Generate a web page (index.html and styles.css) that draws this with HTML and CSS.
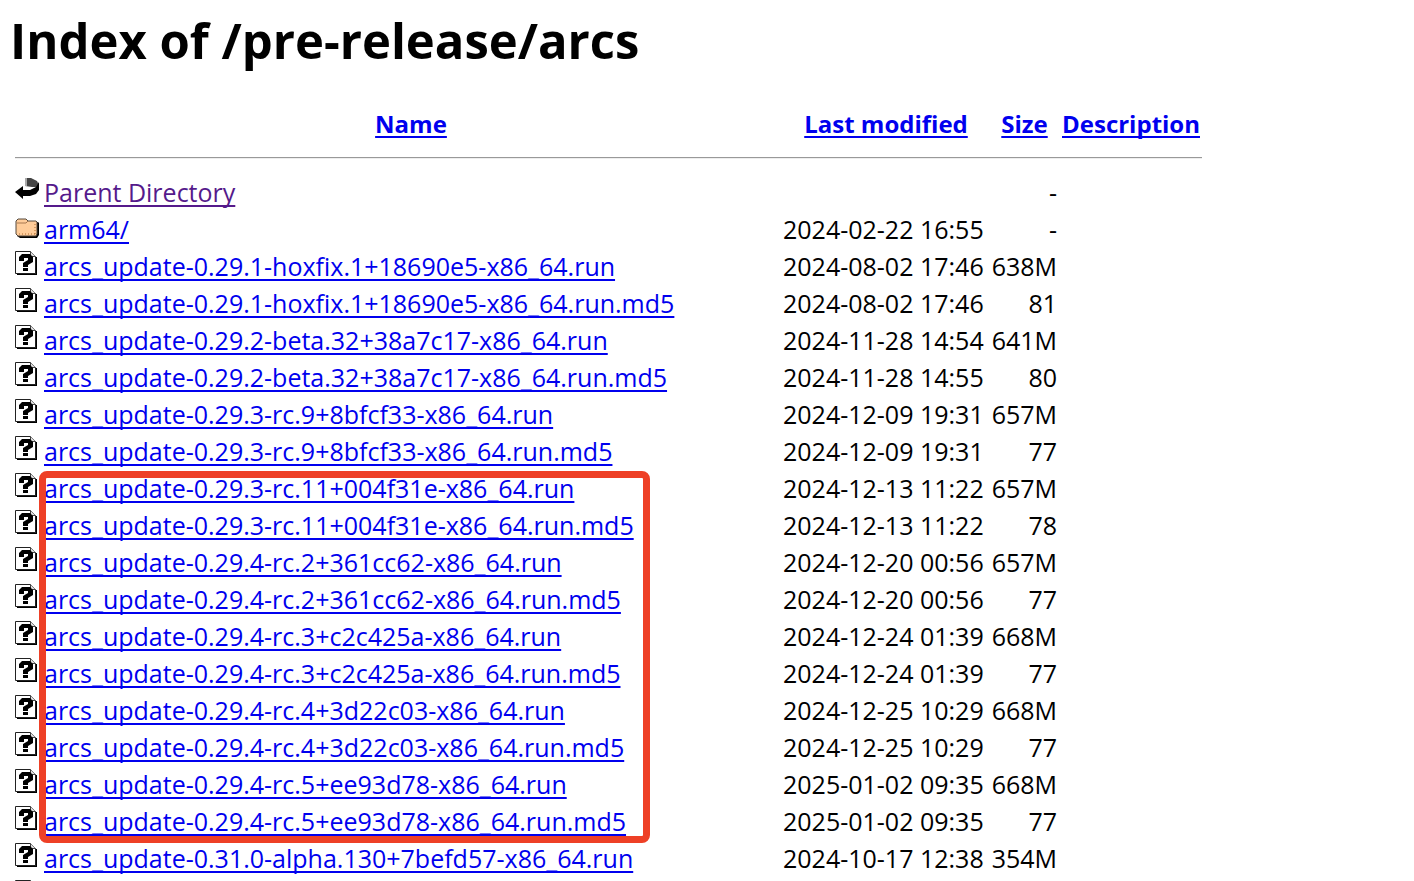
FILE: index.html
```
<!DOCTYPE html>
<html lang="en">
<head>
    <meta charset="UTF-8">
    <meta name="viewport" content="width=device-width, initial-scale=1.0">
    <title>Index of /pre-release/arcs</title>
    <link rel="stylesheet" href="styles.css">
</head>
<body>

<!-- Icon shapes shared by the rows -->
<svg class="sprite" aria-hidden="true">
    <symbol id="back" viewBox="0 0 25 28">
        <path d="M10 2h6l6 3 2 4-1 2-6 0-7-1z" fill="#444"/>
        <path d="M10 2h2v8h-2z" fill="#aaa"/>
        <path d="M24 6v8l-3 4-6 2H8v3L0 16l8-6v4h7l6-3z" fill="#000"/>
    </symbol>
    <symbol id="folder" viewBox="0 0 25 28">
        <path d="M3 9h20l1 1v12l-2 3H5l-3-2z" fill="#000"/>
        <path d="M1 8l2-2h8l2 2h8l1 1v12l-1 2H3l-2-2z" fill="#ffcc99" stroke="#54483c"/>
        <path d="M2 10h9l2-2" fill="none" stroke="#a87850"/>
        <path d="M4 21h16M20 11v10" fill="none" stroke="#b06c30" stroke-dasharray="1 2"/>
    </symbol>
    <symbol id="unknown" viewBox="0 0 25 28">
        <path d="M2 24h19V7" fill="none" stroke="#000" stroke-width="2"/>
        <path d="M.5 1.5h15l5 5v17H.5z" fill="#fff" stroke="#222"/>
        <path d="M15.500 1.500v5h5" fill="#ddd" stroke="#444"/>
        <path d="M4 7l3-3h8l3 3v5l-5 3v2H8v-4l5-3V8H9v3H4z" fill="#000"/>
        <path d="M8 18h5v3H8z" fill="#000"/>
    </symbol>
</svg>

<h1>Index of /pre-release/arcs</h1>

<table class="listing">
    <colgroup>
        <col class="col-icon">
        <col class="col-name">
        <col class="col-date">
        <col class="col-size">
        <col class="col-desc">
    </colgroup>
    <thead>
        <tr><th></th><th><a href="#name">Name</a></th><th><a href="#modified">Last modified</a></th><th><a href="#size">Size</a></th><th><a href="#description">Description</a></th></tr>
        <tr class="rule"><th colspan="5"><hr></th></tr>
    </thead>
    <tbody>
        <tr><td><svg class="icon"><use href="#back"/></svg></td><td><a class="visited" href="#parent">Parent Directory</a></td><td></td><td>-</td><td></td></tr>
        <tr><td><svg class="icon"><use href="#folder"/></svg></td><td><a href="#f">arm64/</a></td><td>2024-02-22 16:55</td><td>-</td><td></td></tr>
        <tr><td><svg class="icon"><use href="#unknown"/></svg></td><td><a href="#f">arcs_update-0.29.1-hoxfix.1+18690e5-x86_64.run</a></td><td>2024-08-02 17:46</td><td>638M</td><td></td></tr>
        <tr><td><svg class="icon"><use href="#unknown"/></svg></td><td><a href="#f">arcs_update-0.29.1-hoxfix.1+18690e5-x86_64.run.md5</a></td><td>2024-08-02 17:46</td><td>81</td><td></td></tr>
        <tr><td><svg class="icon"><use href="#unknown"/></svg></td><td><a href="#f">arcs_update-0.29.2-beta.32+38a7c17-x86_64.run</a></td><td>2024-11-28 14:54</td><td>641M</td><td></td></tr>
        <tr><td><svg class="icon"><use href="#unknown"/></svg></td><td><a href="#f">arcs_update-0.29.2-beta.32+38a7c17-x86_64.run.md5</a></td><td>2024-11-28 14:55</td><td>80</td><td></td></tr>
        <tr><td><svg class="icon"><use href="#unknown"/></svg></td><td><a href="#f">arcs_update-0.29.3-rc.9+8bfcf33-x86_64.run</a></td><td>2024-12-09 19:31</td><td>657M</td><td></td></tr>
        <tr><td><svg class="icon"><use href="#unknown"/></svg></td><td><a href="#f">arcs_update-0.29.3-rc.9+8bfcf33-x86_64.run.md5</a></td><td>2024-12-09 19:31</td><td>77</td><td></td></tr>
    </tbody>
    <!-- Builds outlined in red -->
    <tbody class="marked">
        <tr><td><svg class="icon"><use href="#unknown"/></svg></td><td><a href="#f">arcs_update-0.29.3-rc.11+004f31e-x86_64.run</a></td><td>2024-12-13 11:22</td><td>657M</td><td></td></tr>
        <tr><td><svg class="icon"><use href="#unknown"/></svg></td><td><a href="#f">arcs_update-0.29.3-rc.11+004f31e-x86_64.run.md5</a></td><td>2024-12-13 11:22</td><td>78</td><td></td></tr>
        <tr><td><svg class="icon"><use href="#unknown"/></svg></td><td><a href="#f">arcs_update-0.29.4-rc.2+361cc62-x86_64.run</a></td><td>2024-12-20 00:56</td><td>657M</td><td></td></tr>
        <tr><td><svg class="icon"><use href="#unknown"/></svg></td><td><a href="#f">arcs_update-0.29.4-rc.2+361cc62-x86_64.run.md5</a></td><td>2024-12-20 00:56</td><td>77</td><td></td></tr>
        <tr><td><svg class="icon"><use href="#unknown"/></svg></td><td><a href="#f">arcs_update-0.29.4-rc.3+c2c425a-x86_64.run</a></td><td>2024-12-24 01:39</td><td>668M</td><td></td></tr>
        <tr><td><svg class="icon"><use href="#unknown"/></svg></td><td><a href="#f">arcs_update-0.29.4-rc.3+c2c425a-x86_64.run.md5</a></td><td>2024-12-24 01:39</td><td>77</td><td></td></tr>
        <tr><td><svg class="icon"><use href="#unknown"/></svg></td><td><a href="#f">arcs_update-0.29.4-rc.4+3d22c03-x86_64.run</a></td><td>2024-12-25 10:29</td><td>668M</td><td></td></tr>
        <tr><td><svg class="icon"><use href="#unknown"/></svg></td><td><a href="#f">arcs_update-0.29.4-rc.4+3d22c03-x86_64.run.md5</a></td><td>2024-12-25 10:29</td><td>77</td><td></td></tr>
        <tr><td><svg class="icon"><use href="#unknown"/></svg></td><td><a href="#f">arcs_update-0.29.4-rc.5+ee93d78-x86_64.run</a></td><td>2025-01-02 09:35</td><td>668M</td><td></td></tr>
        <tr><td><svg class="icon"><use href="#unknown"/></svg></td><td><a href="#f">arcs_update-0.29.4-rc.5+ee93d78-x86_64.run.md5</a></td><td>2025-01-02 09:35</td><td>77</td><td></td></tr>
    </tbody>
    <tbody>
        <tr><td><svg class="icon"><use href="#unknown"/></svg></td><td><a href="#f">arcs_update-0.31.0-alpha.130+7befd57-x86_64.run</a></td><td>2024-10-17 12:38</td><td>354M</td><td></td></tr>
        <tr><td><svg class="icon"><use href="#unknown"/></svg></td><td></td><td></td><td></td><td></td></tr>
    </tbody>
</table>

</body>
</html>
```
FILE: styles.css
```
body {
    height: 100vh;
    margin: 0;
    overflow: hidden;
    background-color: #fff;
    color: #000;
    font-family: "Open Sans", "Noto Sans", sans-serif;
    font-size: 25px;
    line-height: 33px;
}
.sprite {
    display: none;
}
h1 {
    margin: 0 0 36px;
    padding: 10px 10px 0;
    font-size: 49px;
    line-height: 60px;
}
a {
    color: #0000ee;
    text-decoration-thickness: 2px;
    text-underline-offset: 3px;
    text-decoration-skip-ink: none;
}
a.visited {
    color: #551a8b;
}
.listing {
    margin-left: 15px;
    table-layout: fixed;
    width: 1187px;
    border-collapse: collapse;
}
.col-icon { width: 24px; }
.col-name { width: 744px; }
.col-date { width: 206px; }
.col-size { width: 71px; }
.col-desc { width: 142px; }
th, td {
    height: 35px;
    padding: 1px 0;
    white-space: nowrap;
    vertical-align: top;
}
th {
    font-size: 24px;
    text-align: center;
}
.rule th {
    height: auto;
    padding: 14px 0 16px;
}
hr {
    height: 0;
    margin: 0;
    border: 0;
    border-top: 1px solid #999;
    border-bottom: 1px solid #eee;
}
td:nth-child(2) {
    padding-left: 5px;
}
td:nth-child(4) {
    padding-right: 3px;
    text-align: right;
}
.icon {
    display: block;
    width: 25px;
    height: 28px;
}
/* Red frame over the file names */
.marked {
    position: relative;
}
.marked::after {
    content: "";
    position: absolute;
    top: 0;
    bottom: -2px;
    left: 24px;
    width: 611px;
    box-sizing: border-box;
    border: 7px solid #ee4026;
    border-radius: 8px;
}
```
